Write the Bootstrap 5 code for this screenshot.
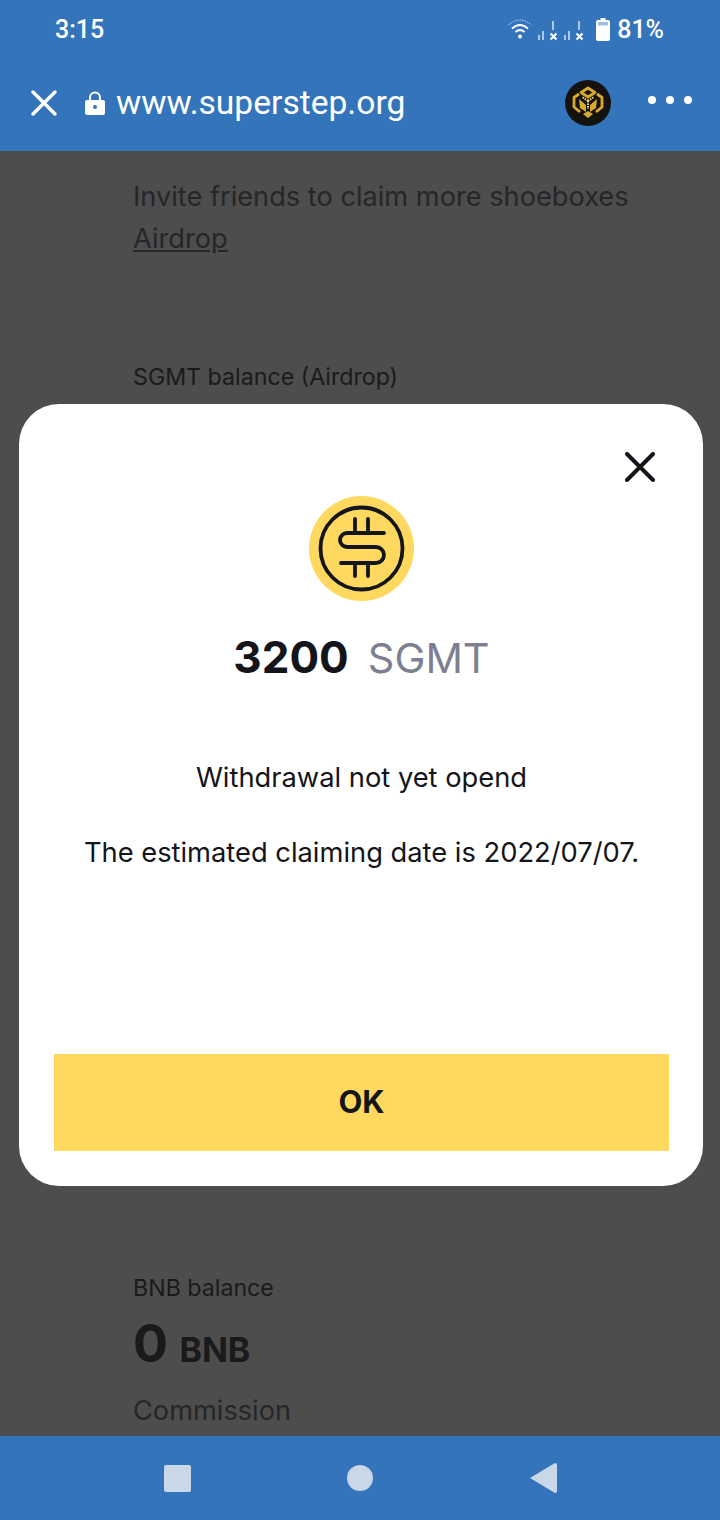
<!DOCTYPE html>
<html lang="en">
<head>
    <meta charset="UTF-8">
    <meta name="viewport" content="width=device-width, initial-scale=1.0">
    <title>Superstep</title>
    <link href="https://cdn.jsdelivr.net/npm/bootstrap@5.3.0/dist/css/bootstrap.min.css" rel="stylesheet">
    <style>
        html, body {
    height: 100%;
    overflow: hidden;
}

body {
    background-color: #4d4d4d;
    font-family: Inter, "Liberation Sans", sans-serif;
    color: #14151a;
}

.phone-shell {
    height: 1520px;
    position: relative;
}

.top-chrome {
    background-color: #3474ba;
    height: 151px;
    color: #fff;
}

.status-row {
    height: 56px;
    padding: 3px 56px 0 55px;
}

.status-time {
    font-family: Roboto, sans-serif;
    font-size: 25px;
    font-weight: 500;
    line-height: 40px;
}

.status-pct {
    font-family: Roboto, sans-serif;
    font-size: 25px;
    font-weight: 500;
    line-height: 40px;
    margin-left: 7px;
}

.battery-mark {
    margin-left: 12px;
}

.url-row {
    height: 95px;
    padding: 0 28px 2px 31px;
}

.lock-mark {
    margin-left: 28px;
}

.url-text {
    font-family: Roboto, sans-serif;
    font-size: 33.6px;
    line-height: 40px;
    margin-left: 11px;
}

.more-dots {
    margin-left: 37px;
    margin-bottom: 6px;
}

.behind-page {
    height: 1285px;
    overflow: hidden;
    padding: 25px 0 0 133px;
    color: #1a1a1b;
}

.dim-line {
    font-size: 27.2px;
    line-height: 42px;
    color: #262628;
    white-space: nowrap;
}

.dim-link {
    color: #262628;
    text-decoration: underline;
}

.balance-label {
    font-size: 23.2px;
    line-height: 30px;
    margin-top: 102px;
}

.balance-gap {
    margin-top: 881px;
}

.balance-value {
    font-size: 52px;
    font-weight: 700;
    line-height: 60px;
    margin-top: 11px;
}

.balance-unit {
    font-size: 34px;
    margin-left: -1px;
}

.commission-line {
    margin-top: 10px;
}

.bottom-nav {
    background-color: #3474ba;
    height: 84px;
}

.nav-slot {
    width: 183px;
}

.claim-dialog {
    position: absolute;
    left: 19px;
    top: 404px;
    width: 684px;
    height: 782px;
    background: #fff;
    border-radius: 40px;
    padding: 92px 34px 35px 35px;
}

.dialog-close {
    position: absolute;
    top: 48px;
    right: 48px;
    line-height: 0;
}

.coin-mark {
    margin-left: -1px;
}

.amount-row {
    margin-top: 26px;
    line-height: 60px;
    gap: 19px;
    align-items: baseline;
}

.amount-num {
    font-size: 44px;
    font-weight: 700;
}

.amount-unit {
    font-size: 41.5px;
    color: #7c8091;
}

.dialog-text {
    font-size: 27.3px;
    line-height: 36px;
    color: #14151a;
}

.first-text {
    margin-top: 72px;
}

.second-text {
    margin-top: 39px;
}

.btn-ok {
    background-color: #ffd95f;
    border: 0;
    border-radius: 0;
    height: 97px;
    font-size: 31px;
    font-weight: 700;
    color: #14151a;
}

.btn-ok:hover {
    background-color: #ffd95f;
    color: #14151a;
}
    </style>
</head>
<body>
    <div class="phone-shell d-flex flex-column">
        <div class="top-chrome">
            <div class="status-row d-flex justify-content-between align-items-center">
                <span class="status-time">3:15</span>
                <div class="d-flex align-items-center">
                    <!-- wifi and two empty signal icons -->
                    <svg width="76" height="24" viewBox="0 0 76 24" fill="none" stroke="#fff">
                        <path d="M0.5 7 Q12 -3 23.5 7" stroke-width="1" stroke-dasharray="1.5 1" opacity=".75"/>
                        <path d="M4 10.5 Q12 3.5 20 10.5" stroke-width="2"/>
                        <path d="M7.5 14 Q12 10 16.5 14" stroke-width="2"/>
                        <circle cx="12" cy="18.5" r="2" fill="#fff" stroke="none"/>
                        <path d="M31 22v-5M35 22v-9M45 12V3M57 22v-5M61 22v-9M71 12V3" stroke-width="1.6" opacity=".75"/>
                        <path d="M42.5 15.5l6 6M48.5 15.5l-6 6M68.5 15.5l6 6M74.5 15.5l-6 6" stroke-width="2"/>
                    </svg>
                    <svg class="battery-mark" width="14" height="23" viewBox="0 0 14 23">
                        <path d="M4.5 0h5v2H12q2 0 2 2v17q0 2-2 2H2q-2 0-2-2V4q0-2 2-2h2.500z" fill="#fff"/>
                        <rect x="2" y="4" width="10" height="3.500" fill="#9fc0e2"/>
                    </svg>
                    <span class="status-pct">81%</span>
                </div>
            </div>
            <div class="url-row d-flex align-items-center">
                <svg width="26" height="26" viewBox="0 0 26 26" stroke="#fff" stroke-width="3.4" stroke-linecap="round">
                    <path d="M2 2l22 22M24 2L2 24"/>
                </svg>
                <svg class="lock-mark" width="20" height="24" viewBox="0 0 20 24">
                    <path d="M4 9V6.500a6 6 0 0 1 12 0V9h2q2 0 2 2v11q0 2-2 2H2q-2 0-2-2V11q0-2 2-2zm2 0h8V6.500a4 4 0 0 0-8 0z" fill="#fff"/>
                    <circle cx="10" cy="16" r="2" fill="#3474ba"/>
                </svg>
                <span class="url-text flex-grow-1">www.superstep.org</span>
                <svg width="46" height="46" viewBox="0 0 46 46">
                    <circle cx="23" cy="23" r="23" fill="#14130f"/>
                    <g fill="none" stroke="#d8a92f" stroke-width="2.800" stroke-linejoin="round">
                        <path d="M23 8l7 4.500-7 4.500-7-4.500z"/>
                        <path d="M14 14l-5 3.500V27l6 5M32 14l5 3.500V27l-6 5"/>
                    </g>
                    <path d="M14 19l7 6v7l-6-4zM32 19l-7 6v7l6-4zM18 34l5-3 5 3-5 4z" fill="#d8a92f"/>
                    <path d="M23 21l-6-4M23 21l6-4M23 21v8" stroke="#f0d77a" stroke-width="2" stroke-dasharray="1.500 1" fill="none"/>
                </svg>
                <svg class="more-dots" width="44" height="8" viewBox="0 0 44 8" fill="#fff">
                    <circle cx="4" cy="4" r="4"/><circle cx="22" cy="4" r="4"/><circle cx="40" cy="4" r="4"/>
                </svg>
            </div>
        </div>

        <div class="behind-page">
            <div class="dim-line">Invite friends to claim more shoeboxes</div>
            <div class="dim-line"><a class="dim-link" href="#">Airdrop</a></div>
            <div class="balance-label">SGMT balance (Airdrop)</div>
            <div class="balance-label balance-gap">BNB balance</div>
            <div class="balance-value">0 <span class="balance-unit">BNB</span></div>
            <div class="dim-line commission-line">Commission</div>
        </div>

        <div class="bottom-nav d-flex justify-content-center align-items-center">
            <div class="nav-slot d-flex justify-content-center">
                <svg width="27" height="27" viewBox="0 0 27 27"><rect width="27" height="27" rx="2" fill="#c9d7e8"/></svg>
            </div>
            <div class="nav-slot d-flex justify-content-center">
                <svg width="26" height="26" viewBox="0 0 26 26"><circle cx="13" cy="13" r="13" fill="#c9d7e8"/></svg>
            </div>
            <div class="nav-slot d-flex justify-content-center">
                <svg width="27" height="30" viewBox="0 0 27 30"><path d="M0 15L25 0q2 0 2 2v26q0 2-2 2z" fill="#c9d7e8"/></svg>
            </div>
        </div>

        <div class="claim-dialog d-flex flex-column text-center">
            <div class="dialog-close">
                <svg width="30" height="30" viewBox="0 0 30 30" stroke="#14151a" stroke-width="4" stroke-linecap="round">
                    <path d="M2 2l26 26M28 2L2 28"/>
                </svg>
            </div>
            <div>
                <svg class="coin-mark" width="105" height="105" viewBox="0 0 105 105" fill="none" stroke="#14151a" stroke-width="3.800" stroke-linecap="round">
                    <circle cx="52.5" cy="52.5" r="52.5" fill="#ffd95f" stroke="none"/>
                    <circle cx="52.5" cy="52.5" r="41"/>
                    <path d="M75 37H38a7 7 0 0 0 0 14h29a8 8 0 0 1 0 16H32"/>
                    <path d="M46 23v14M59 23v14M46 67v13M59 67v13"/>
                </svg>
            </div>
            <div class="amount-row d-flex justify-content-center">
                <span class="amount-num">3200</span>
                <span class="amount-unit">SGMT</span>
            </div>
            <p class="dialog-text first-text mb-0">Withdrawal not yet opend</p>
            <p class="dialog-text second-text mb-0 flex-grow-1">The estimated claiming date is 2022/07/07.</p>
            <button class="btn btn-ok w-100" type="button">OK</button>
        </div>
    </div>

    <script src="https://cdn.jsdelivr.net/npm/bootstrap@5.3.0/dist/js/bootstrap.bundle.min.js"></script>
</body>
</html>
